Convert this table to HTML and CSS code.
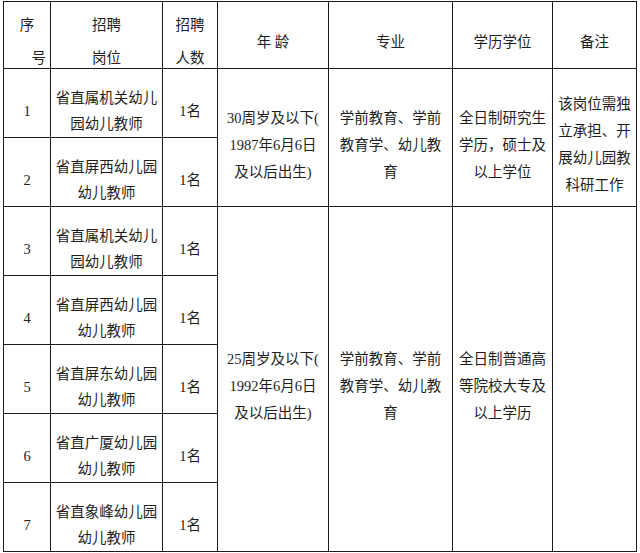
FILE: index.html
```html
<!DOCTYPE html>
<html lang="zh-CN">
<head>
<meta charset="utf-8">
<title>招聘岗位表</title>
<link rel="stylesheet" href="styles.css">
</head>
<body>
<table class="jobs">
  <colgroup>
    <col class="c-no"><col class="c-post"><col class="c-num"><col class="c-age"><col class="c-major"><col class="c-edu"><col class="c-note">
  </colgroup>
  <thead>
    <tr class="head">
      <th class="h-no"><span class="ln l1">序</span><span class="ln l2">号</span></th>
      <th><span class="ln">招聘</span><span class="ln">岗位</span></th>
      <th><span class="ln">招聘</span><span class="ln">人数</span></th>
      <th>年 龄</th>
      <th>专业</th>
      <th>学历学位</th>
      <th>备注</th>
    </tr>
  </thead>
  <tbody>
    <tr>
      <td>1</td>
      <td>省直属机关幼儿<br>园幼儿教师</td>
      <td>1名</td>
      <td class="span" rowspan="2">30周岁及以下(<br>1987年6月6日<br>及以后出生)</td>
      <td class="span" rowspan="2">学前教育、学前<br>教育学、幼儿教<br>育</td>
      <td class="span" rowspan="2">全日制研究生<br>学历，硕士及<br>以上学位</td>
      <td class="span" rowspan="2">该岗位需独<br>立承担、开<br>展幼儿园教<br>科研工作</td>
    </tr>
    <tr>
      <td>2</td>
      <td>省直屏西幼儿园<br>幼儿教师</td>
      <td>1名</td>
    </tr>
    <tr>
      <td>3</td>
      <td>省直属机关幼儿<br>园幼儿教师</td>
      <td>1名</td>
      <td class="span" rowspan="5">25周岁及以下(<br>1992年6月6日<br>及以后出生)</td>
      <td class="span" rowspan="5">学前教育、学前<br>教育学、幼儿教<br>育</td>
      <td class="span" rowspan="5">全日制普通高<br>等院校大专及<br>以上学历</td>
      <td class="span" rowspan="5"></td>
    </tr>
    <tr>
      <td>4</td>
      <td>省直屏西幼儿园<br>幼儿教师</td>
      <td>1名</td>
    </tr>
    <tr>
      <td>5</td>
      <td>省直屏东幼儿园<br>幼儿教师</td>
      <td>1名</td>
    </tr>
    <tr>
      <td>6</td>
      <td>省直广厦幼儿园<br>幼儿教师</td>
      <td>1名</td>
    </tr>
    <tr>
      <td>7</td>
      <td>省直象峰幼儿园<br>幼儿教师</td>
      <td>1名</td>
    </tr>
  </tbody>
</table>
</body>
</html>
```
FILE: styles.css
```css
html, body {
  margin: 0;
  padding: 0;
  background: #ffffff;
}

body {
  padding: 1px 0 0 3px;
  font-family: "Liberation Serif", "Noto Sans CJK SC", serif;
  font-size: 14.5px;
  color: #1e1e1e;
}

.jobs {
  border-collapse: collapse;
  table-layout: fixed;
  width: 633px;
}

.c-no { width: 47px; }
.c-post { width: 112px; }
.c-num { width: 55px; }
.c-age { width: 111px; }
.c-major { width: 124px; }
.c-edu { width: 100px; }
.c-note { width: 84px; }

.jobs th,
.jobs td {
  border: 1px solid #1a1a1a;
  text-align: center;
  vertical-align: middle;
  font-weight: normal;
  white-space: nowrap;
  box-sizing: content-box;
}

.head th {
  height: 52px;
  padding: 14px 0 0 0;
  line-height: 19px;
}

.head .ln {
  display: block;
}

.head .ln + .ln {
  margin-top: 14px;
}

.h-no .l1 {
  text-align: center;
}

.h-no .l2 {
  text-align: right;
  padding-right: 4px;
}

.jobs tbody td {
  height: 53px;
  padding: 15px 0 0 0;
  line-height: 26px;
}

.jobs tbody td.span {
  line-height: 27px;
}
```
